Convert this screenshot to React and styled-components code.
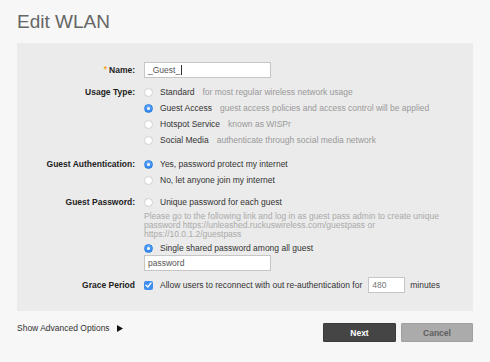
import React from 'react';
import styled, { createGlobalStyle } from 'styled-components';

const Global = createGlobalStyle`
  html, body { margin: 0; padding: 0; background: #f7f7f7; }
  body { font-family: "Liberation Sans", Arial, Helvetica, sans-serif; }
`;

const Page = styled.div`
  width: 490px;
  height: 362px;
  box-sizing: border-box;
  padding: 12px 17px 0;
`;

const Title = styled.h1`
  margin: 0 0 12px;
  font-size: 19px;
  line-height: 19px;
  font-weight: normal;
  color: #666;
`;

const Panel = styled.div`
  background: #ebebeb;
  padding: 19px 20px 18px 0;
  display: flex;
  flex-direction: column;
`;

const Row = styled.div`
  display: grid;
  grid-template-columns: 118px 1fr;
  column-gap: 9px;
  margin-top: ${p => p.$mt || 0}px;
`;

const Label = styled.div`
  text-align: right;
  font-weight: bold;
  font-size: 8.5px;
  color: #222;
  line-height: ${p => p.$lh || 14}px;
`;

const Star = styled.span`
  color: #f5a623;
  margin-right: 2px;
  position: relative;
  top: -1px;
`;

const Controls = styled.div`
  display: flex;
  flex-direction: column;
  gap: 2px;
`;

const Option = styled.div`
  display: flex;
  align-items: center;
  height: 14px;
  font-size: 8.5px;
  color: #333;
  white-space: nowrap;
`;

const Radio = styled.span`
  width: 9px;
  height: 9px;
  border-radius: 50%;
  box-sizing: border-box;
  margin-right: 7px;
  flex: none;
  position: relative;
  background: ${p => (p.$on ? 'linear-gradient(#5ea8f9, #2f85ef)' : '#fff')};
  border: 1px solid ${p => (p.$on ? '#2d7de3' : '#cfcfcf')};
  &::after {
    content: '';
    display: ${p => (p.$on ? 'block' : 'none')};
    position: absolute;
    left: 2px;
    top: 2px;
    width: 3px;
    height: 3px;
    border-radius: 50%;
    background: #fff;
  }
`;

const Desc = styled.span`
  color: #999;
  margin-left: 8px;
`;

const Hint = styled.div`
  font-size: 8.5px;
  line-height: 9px;
  color: #aaa;
  margin: 1px 0 0;
`;

const Field = styled.div`
  width: ${p => p.$w || 127}px;
  height: 16px;
  box-sizing: border-box;
  background: #fff;
  border: 1px solid #c6c6c6;
  font-size: 8.5px;
  color: ${p => p.$muted ? '#777' : '#555'};
  padding: 0 3px;
  display: flex;
  align-items: center;
  margin-top: ${p => p.$mt || 0}px;
  margin-left: ${p => p.$ml || 0}px;
  flex: none;
`;

const Caret = styled.span`
  display: inline-block;
  width: 1px;
  height: 10px;
  background: #333;
  margin-left: 1px;
`;

const Inline = styled.div`
  display: flex;
  align-items: center;
  height: 16px;
  font-size: 8.5px;
  color: #333;
  white-space: nowrap;
`;

const Check = styled.span`
  width: 9px;
  height: 9px;
  border-radius: 2px;
  background: #3f8ef0;
  margin-right: 7px;
  display: flex;
  align-items: center;
  justify-content: center;
  flex: none;
`;

const Unit = styled.span`
  margin-left: 5px;
`;

const Footer = styled.div`
  display: flex;
  justify-content: space-between;
  align-items: flex-start;
  margin-top: 12px;
`;

const Advanced = styled.div`
  display: flex;
  align-items: center;
  gap: 7px;
  font-size: 8.5px;
  line-height: 10px;
  color: #333;
`;

const Buttons = styled.div`
  display: flex;
  gap: 5px;
`;

const Button = styled.button`
  width: ${p => p.$w}px;
  height: 19px;
  box-sizing: border-box;
  padding: 0;
  font-family: inherit;
  font-size: 8.5px;
  font-weight: bold;
  border-radius: 1px;
  border: 1px solid ${p => (p.$primary ? '#3a3a3a' : '#a0a0a0')};
  background: ${p => (p.$primary ? '#454545' : '#ababab')};
  color: ${p => (p.$primary ? '#fff' : '#5e5e5e')};
`;

export default function App() {
  return (
    <Page>
      <Global />
      <Title>Edit WLAN</Title>
      <Panel>
        <Row>
          <Label $lh={16}><Star>*</Star>Name:</Label>
          <Field>_Guest_<Caret /></Field>
        </Row>

        <Row $mt={7}>
          <Label>Usage Type:</Label>
          <Controls>
            <Option><Radio />Standard<Desc>for most regular wireless network usage</Desc></Option>
            <Option><Radio $on />Guest Access<Desc>guest access policies and access control will be applied</Desc></Option>
            <Option><Radio />Hotspot Service<Desc>known as WISPr</Desc></Option>
            <Option><Radio />Social Media<Desc>authenticate through social media network</Desc></Option>
          </Controls>
        </Row>

        <Row $mt={10}>
          <Label>Guest Authentication:</Label>
          <Controls>
            <Option><Radio $on />Yes, password protect my internet</Option>
            <Option><Radio />No, let anyone join my internet</Option>
          </Controls>
        </Row>

        <Row $mt={8}>
          <Label>Guest Password:</Label>
          <Controls>
            <Option><Radio />Unique password for each guest</Option>
            <Hint>
              Please go to the following link and log in as guest pass admin to create unique password https://unleashed.ruckuswireless.com/guestpass or https://10.0.1.2/guestpass
            </Hint>
            <Option><Radio $on />Single shared password among all guest</Option>
            <Field $mt={-2}>password</Field>
          </Controls>
        </Row>

        <Row $mt={6}>
          <Label $lh={16}>Grace Period</Label>
          <Inline>
            <Check>
              <svg width="7" height="6" viewBox="0 0 7 6">
                <path d="M1 3.2 L2.8 5 L6 1" fill="none" stroke="#fff" strokeWidth="1.3" strokeLinecap="round" strokeLinejoin="round" />
              </svg>
            </Check>
            Allow users to reconnect with out re-authentication for
            <Field $w={37} $ml={6} $muted>480</Field>
            <Unit>minutes</Unit>
          </Inline>
        </Row>
      </Panel>

      <Footer>
        <Advanced>
          Show Advanced Options
          <svg width="6" height="7" viewBox="0 0 6 7">
            <path d="M0 0 L6 3.5 L0 7 Z" fill="#111" />
          </svg>
        </Advanced>
        <Buttons>
          <Button $primary $w={73}>Next</Button>
          <Button $w={72}>Cancel</Button>
        </Buttons>
      </Footer>
    </Page>
  );
}
